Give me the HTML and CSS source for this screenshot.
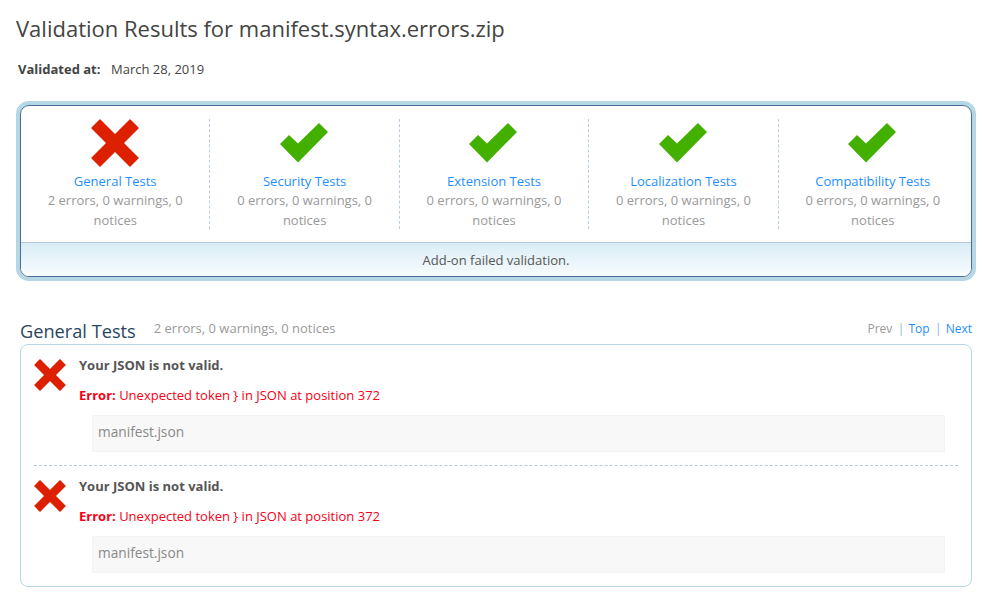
FILE: index.html
```html
<!DOCTYPE html>
<html lang="en">
<head>
<meta charset="utf-8">
<title>Validation Results</title>
<link rel="stylesheet" href="styles.css">
</head>
<body>
<svg class="defs" width="0" height="0" aria-hidden="true">
  <symbol id="cross" viewBox="0 0 48 48"><path d="M9.5 0.5L24 15 38.5 0.5Q39 0 39.5 0.5L47.5 8.5Q48 9 47.5 9.5L33 24 47.5 38.5Q48 39 47.5 39.5L39.5 47.5Q39 48 38.5 47.5L24 33 9.5 47.5Q9 48 8.5 47.5L0.5 39.5Q0 39 0.5 38.5L15 24 0.5 9.5Q0 9 0.5 8.5L8.5 0.5Q9 0 9.5 0.5Z" fill="#dc2000"/></symbol>
  <symbol id="check" viewBox="0 0 48 40"><path d="M0 21L9 12 18 20.5 39 0 48 9 18 39.5Z" fill="#43b000"/></symbol>
</svg>
<h1 class="title">Validation Results for manifest.syntax.errors.zip</h1>
<p class="meta"><strong class="meta-label">Validated at:</strong><span>March 28, 2019</span></p>

<section class="summary">
  <div class="cols">
    <div class="col"><svg class="ic-cross"><use href="#cross"/></svg><a class="link" href="#">General Tests</a><p class="counts">2 errors, 0 warnings, 0 notices</p></div>
    <div class="col"><svg class="ic-check"><use href="#check"/></svg><a class="link" href="#">Security Tests</a><p class="counts">0 errors, 0 warnings, 0 notices</p></div>
    <div class="col"><svg class="ic-check"><use href="#check"/></svg><a class="link" href="#">Extension Tests</a><p class="counts">0 errors, 0 warnings, 0 notices</p></div>
    <div class="col"><svg class="ic-check"><use href="#check"/></svg><a class="link" href="#">Localization Tests</a><p class="counts">0 errors, 0 warnings, 0 notices</p></div>
    <div class="col"><svg class="ic-check"><use href="#check"/></svg><a class="link" href="#">Compatibility Tests</a><p class="counts">0 errors, 0 warnings, 0 notices</p></div>
  </div>
  <div class="verdict">Add-on failed validation.</div>
</section>

<header class="section-head">
  <h2 class="section-title">General Tests</h2>
  <span class="section-counts">2 errors, 0 warnings, 0 notices</span>
  <nav class="pager"><span class="muted">Prev</span><span class="sep">|</span><a class="link" href="#">Top</a><span class="sep">|</span><a class="link" href="#">Next</a></nav>
</header>

<section class="results">
  <article class="result">
    <svg class="ic-small"><use href="#cross"/></svg>
    <div class="result-body">
      <h3 class="result-title">Your JSON is not valid.</h3>
      <p class="error"><strong>Error:</strong> Unexpected token } in JSON at position 372</p>
      <div class="file">manifest.json</div>
    </div>
  </article>
  <article class="result">
    <svg class="ic-small"><use href="#cross"/></svg>
    <div class="result-body">
      <h3 class="result-title">Your JSON is not valid.</h3>
      <p class="error"><strong>Error:</strong> Unexpected token } in JSON at position 372</p>
      <div class="file">manifest.json</div>
    </div>
  </article>
</section>
</body>
</html>
```

FILE: styles.css
```css
* { box-sizing: border-box; }
html, body { margin: 0; padding: 0; }
body {
  font-family: "Open Sans", sans-serif;
  font-size: 13px;
  color: #555;
  background: #fff;
  padding: 0 8px 0 20px;
  height: 615px;
  overflow: hidden;
}
.defs { position: absolute; }
.title {
  margin: 13px 0 0 -4px;
  font-size: 22px;
  line-height: 30px;
  font-weight: 400;
  color: #444;
}
.meta {
  margin: 18px 0 0 -2px;
  line-height: 16px;
  color: #444;
  display: flex;
}
.meta-label { width: 93px; font-weight: 700; }
.summary {
  margin-top: 28px;
  width: 952px;
  height: 172px;
  border: 1px solid #4a6a9c;
  border-radius: 9px;
  box-shadow: 0 0 0 4px #b5d7e4;
  overflow: hidden;
}
.cols { display: flex; height: 136px; width: 947px; margin-left: -1px; padding-top: 13px; }
.col {
  flex: 1 1 0;
  height: 110px;
  padding: 0 20px;
  text-align: center;
  border-left: 1px dashed #b9cfdc;
  display: flex;
  flex-direction: column;
  align-items: center;
  line-height: 20px;
}
.col:first-child { border-left-color: transparent; }
.ic-cross { width: 48px; height: 48px; flex: none; margin-bottom: 4px; }
.ic-check { width: 48px; height: 40px; flex: none; margin: 4px 0 8px -1.5px; }
.link { color: #1e8fff; text-decoration: none; }
.col .link { line-height: 19px; margin-top: 1px; }
.counts { margin: -1px 0 0; color: #999; line-height: 20px; }
.verdict {
  height: 34px;
  border-top: 1px solid #b5c9dc;
  background: linear-gradient(#d9edf6, #f8fcfd);
  text-align: center;
  line-height: 34px;
  color: #555;
}
.section-head {
  display: flex;
  align-items: baseline;
  margin-top: 42px;
  height: 24px;
}
.section-title { margin: 0; font-size: 18.2px; font-weight: 400; color: #2b4560; line-height: 24px; }
.section-counts { margin-left: 18px; color: #999; position: relative; top: -5px; }
.pager { margin-left: auto; margin-right: 3px; font-size: 12px; position: relative; top: -5px; }
.muted { color: #999; }
.sep { color: #8fb4d8; margin: 0 4px 0 5.5px; }
.results {
  width: 952px;
  height: 243px;
  margin-top: 1px;
  border: 1px solid #b5d7e4;
  border-radius: 8px;
  padding: 0 13px;
}
.result { display: flex; height: 120px; padding-top: 12px; }
.result + .result { border-top: 1px dashed #b5cbd6; height: 121px; }
.ic-small { width: 32px; height: 32px; flex: none; margin: 2px 13px 0 0; }
.result-body { flex: 1 1 0; min-width: 0; }
.result-title { margin: 0; font-size: 13px; font-weight: 700; line-height: 16px; color: #555; }
.error { margin: 14px 0 0; line-height: 16px; color: #f80016; }
.file {
  margin: 12px 13px 0 13px;
  height: 37px;
  padding: 0 5px;
  background: #f8f8f8;
  border: 1px solid #f3f3f3;
  font-size: 13.7px;
  line-height: 31px;
  color: #888;
}
```
